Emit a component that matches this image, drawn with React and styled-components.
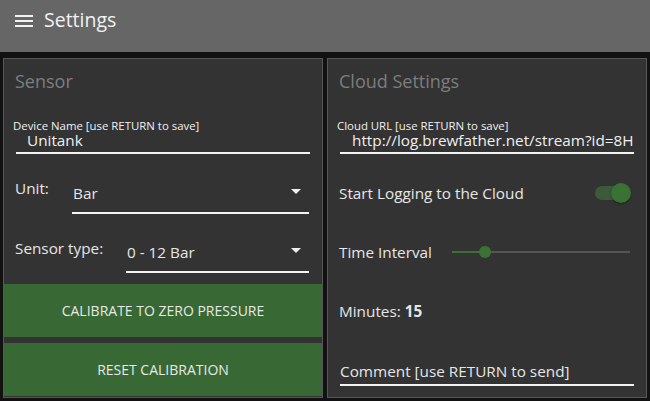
import React from 'react';
import styled, { createGlobalStyle } from 'styled-components';

const GlobalStyle = createGlobalStyle`
  html, body {
    margin: 0;
    padding: 0;
    background: #121212;
    font-family: "Open Sans", "Noto Sans", sans-serif;
    color: #e6e6e6;
  }
  * { box-sizing: border-box; }
`;

const PAGE = styled.div`
  width: 650px;
  height: 401px;
  background: #121212;
  display: flex;
  flex-direction: column;
  overflow: hidden;
`;

const HEADER = styled.div`
  height: 52px;
  background: #666666;
  display: flex;
  align-items: flex-start;
  padding: 7px 0 0 15px;
  gap: 11px;
  flex-shrink: 0;
`;

const MENU = styled.div`
  width: 18px;
  display: flex;
  flex-direction: column;
  gap: 3px;
  margin-top: 8px;

  span {
    display: block;
    height: 2px;
    background: #f2f2f2;
  }
`;

const HEADTITLE = styled.div`
  font-size: 19.5px;
  line-height: 26px;
  color: #f2f2f2;
`;

const MAIN = styled.div`
  flex: 1;
  display: grid;
  grid-template-columns: 320px 320px;
  gap: 4px;
  padding: 6px 3px 3px;
`;

const PANEL = styled.div`
  background: #333333;
  border: 1px solid #575757;
  display: flex;
  flex-direction: column;
  overflow: hidden;
`;

const TITLE = styled.div`
  padding: 10px 11px 0;
  height: 44px;
  font-size: 18px;
  line-height: 24px;
  color: #7d7d7d;
`;

const FIELD = styled.div`
  margin: 17px 12px 0 9px;
`;

const SMALLLABEL = styled.div`
  font-size: 11.4px;
  line-height: 11px;
  color: #f0f0f0;
  white-space: nowrap;
`;

const INPUT = styled.div`
  margin-left: 3px;
  padding: 2px 0 4px ${p => p.indent}px;
  border-bottom: 2px solid #f4f4f4;
  font-size: 15.3px;
  line-height: 15px;
  color: #f0f0f0;
  white-space: nowrap;
  overflow: hidden;
`;

const SELECTROW = styled.div`
  display: flex;
  align-items: flex-start;
  margin: 24px 13px 0 11px;
`;

const ROWLABEL = styled.div`
  width: ${p => p.w}px;
  flex-shrink: 0;
  font-size: 15.3px;
  line-height: 20px;
`;

const SELECT = styled.div`
  flex: 1;
  display: flex;
  align-items: center;
  justify-content: space-between;
  margin-top: ${p => p.top}px;
  padding: 0 8px 9px 1px;
  border-bottom: 2px solid #f4f4f4;
  font-size: 15.3px;
  line-height: 20px;
`;

const ARROW = styled.span`
  width: 0;
  height: 0;
  border-left: 5px solid transparent;
  border-right: 5px solid transparent;
  border-top: 5px solid #f0f0f0;
  margin-top: -3px;
`;

const BUTTONS = styled.div`
  margin-top: 11px;
  display: flex;
  flex-direction: column;
  gap: 6px;
`;

const BUTTON = styled.button`
  height: 53px;
  border: none;
  background: #386934;
  color: #e8e8e8;
  font-family: "Open Sans", "Noto Sans", sans-serif;
  font-size: 14px;
  text-transform: uppercase;
  padding: 0;
`;

const ROW = styled.div`
  display: flex;
  align-items: center;
  justify-content: space-between;
  margin: ${p => p.top}px 16px 0 11px;
  height: 20px;
  font-size: 15.3px;
  line-height: 20px;
  white-space: nowrap;

  b {
    font-weight: 700;
  }
`;

const SWITCH = styled.div`
  position: relative;
  width: 34px;
  height: 14px;
  border-radius: 7px;
  background: #3c5a39;
  margin-right: 1px;

  &::after {
    content: '';
    position: absolute;
    right: -2px;
    top: -3px;
    width: 20px;
    height: 20px;
    border-radius: 50%;
    background: #3a7236;
    box-shadow: 0 1px 2px rgba(0, 0, 0, 0.4);
  }
`;

const SLIDER = styled.div`
  position: relative;
  width: 178px;
  height: 2px;
  background: #555555;

  &::before {
    content: '';
    position: absolute;
    left: 0;
    top: 0;
    height: 2px;
    width: ${p => p.value}%;
    background: #3a7236;
  }

  &::after {
    content: '';
    position: absolute;
    left: ${p => p.value}%;
    top: -5px;
    width: 12px;
    height: 12px;
    margin-left: -6px;
    border-radius: 50%;
    background: #3a7236;
  }
`;

const COMMENT = styled.div`
  margin: 40px 12px 0 12px;
  padding-bottom: 3px;
  border-bottom: 2px solid #f4f4f4;
  font-size: 15.3px;
  line-height: 20px;
  white-space: nowrap;
`;

function App() {
  return (
    <PAGE>
      <GlobalStyle />
      <HEADER>
        <MENU><span /><span /><span /></MENU>
        <HEADTITLE>Settings</HEADTITLE>
      </HEADER>
      <MAIN>
        <PANEL>
          <TITLE>Sensor</TITLE>
          <FIELD>
            <SMALLLABEL>Device Name [use RETURN to save]</SMALLLABEL>
            <INPUT indent={11}>Unitank</INPUT>
          </FIELD>
          <SELECTROW>
            <ROWLABEL w={57}>Unit:</ROWLABEL>
            <SELECT top={5}>Bar<ARROW /></SELECT>
          </SELECTROW>
          <SELECTROW>
            <ROWLABEL w={111}>Sensor type:</ROWLABEL>
            <SELECT top={4}>0 - 12 Bar<ARROW /></SELECT>
          </SELECTROW>
          <BUTTONS>
            <BUTTON>Calibrate to zero pressure</BUTTON>
            <BUTTON>Reset calibration</BUTTON>
          </BUTTONS>
        </PANEL>
        <PANEL>
          <TITLE>Cloud Settings</TITLE>
          <FIELD>
            <SMALLLABEL>Cloud URL [use RETURN to save]</SMALLLABEL>
            <INPUT indent={12}>http://log.brewfather.net/stream?id=8H</INPUT>
          </FIELD>
          <ROW top={29}>
            <span>Start Logging to the Cloud</span>
            <SWITCH />
          </ROW>
          <ROW top={39}>
            <span>Time Interval</span>
            <SLIDER value={18.5} />
          </ROW>
          <ROW top={39}>
            <span>Minutes: <b>15</b></span>
          </ROW>
          <COMMENT>Comment [use RETURN to send]</COMMENT>
        </PANEL>
      </MAIN>
    </PAGE>
  );
}

export default App;
